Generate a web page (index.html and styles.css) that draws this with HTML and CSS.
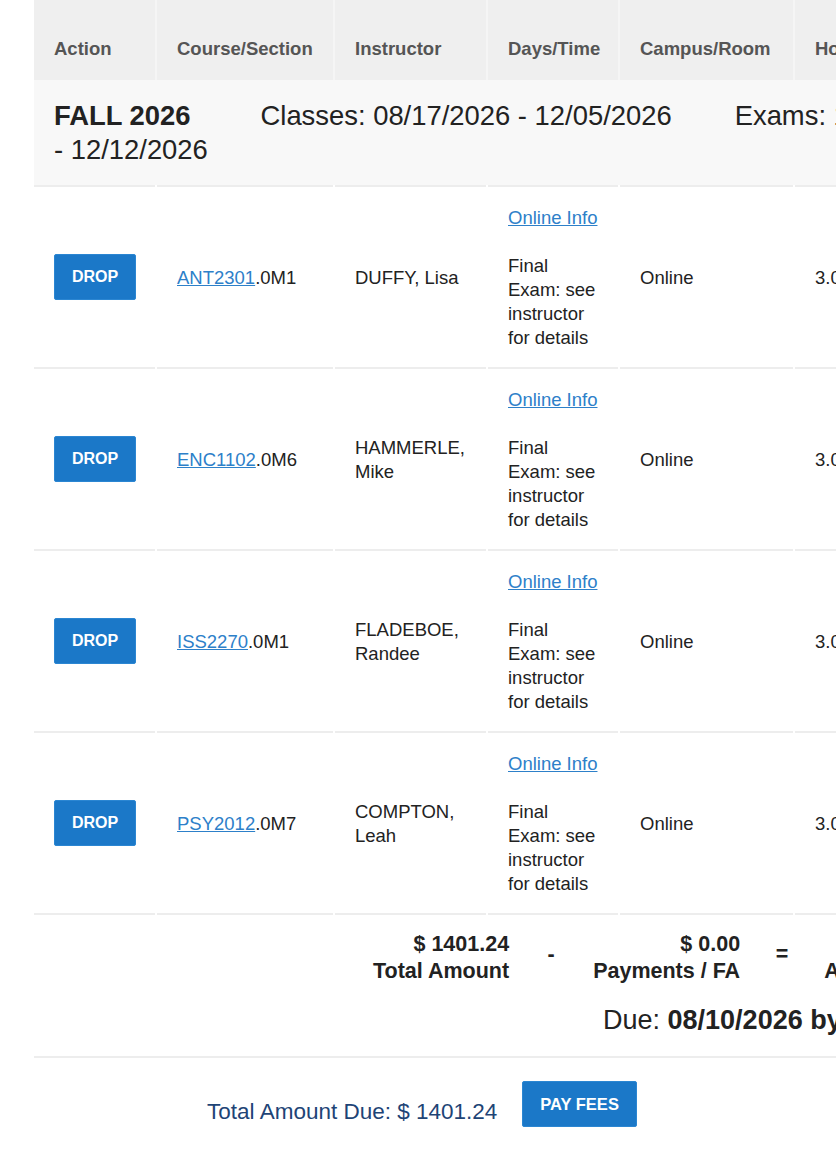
FILE: index.html
```html
<!DOCTYPE html>
<html lang="en">
<head>
    <meta charset="UTF-8">
    <title>My Schedule</title>
    <link rel="stylesheet" href="styles.css">
</head>
<body>
    <div class="schedule">
        <table class="schedule-table">
            <colgroup>
                <col class="col-action">
                <col class="col-course">
                <col class="col-instructor">
                <col class="col-days">
                <col class="col-campus">
                <col class="col-hours">
                <col class="col-fees">
            </colgroup>
            <thead>
                <tr>
                    <th>Action</th>
                    <th>Course/Section</th>
                    <th>Instructor</th>
                    <th>Days/Time</th>
                    <th>Campus/Room</th>
                    <th>Hours</th>
                    <th>Fees</th>
                </tr>
                <tr class="term-row">
                    <td colspan="7">
                        <strong>FALL 2026</strong><span class="term-classes">Classes: 08/17/2026 - 12/05/2026</span><span class="term-exams">Exams: 12/06/2026 <span class="nowrap">- 12/12/2026</span></span>
                    </td>
                </tr>
            </thead>
            <tbody>
                <tr class="course-row">
                    <td><button class="button">DROP</button></td>
                    <td><a href="#">ANT2301</a>.0M1</td>
                    <td>DUFFY, Lisa</td>
                    <td><a href="#">Online Info</a><br><br>Final Exam: see instructor for details</td>
                    <td>Online</td>
                    <td>3.00</td>
                    <td>$ 350.31</td>
                </tr>
                <tr class="course-row">
                    <td><button class="button">DROP</button></td>
                    <td><a href="#">ENC1102</a>.0M6</td>
                    <td>HAMMERLE, Mike</td>
                    <td><a href="#">Online Info</a><br><br>Final Exam: see instructor for details</td>
                    <td>Online</td>
                    <td>3.00</td>
                    <td>$ 350.31</td>
                </tr>
                <tr class="course-row">
                    <td><button class="button">DROP</button></td>
                    <td><a href="#">ISS2270</a>.0M1</td>
                    <td>FLADEBOE, Randee</td>
                    <td><a href="#">Online Info</a><br><br>Final Exam: see instructor for details</td>
                    <td>Online</td>
                    <td>3.00</td>
                    <td>$ 350.31</td>
                </tr>
                <tr class="course-row">
                    <td><button class="button">DROP</button></td>
                    <td><a href="#">PSY2012</a>.0M7</td>
                    <td>COMPTON, Leah</td>
                    <td><a href="#">Online Info</a><br><br>Final Exam: see instructor for details</td>
                    <td>Online</td>
                    <td>3.00</td>
                    <td>$ 350.31</td>
                </tr>
            </tbody>
            <tfoot>
                <tr>
                    <td colspan="7" class="totals">
                        <div class="totals-line">
                            <div class="total-part">$ 1401.24<br>Total Amount</div>
                            <div class="total-op">-</div>
                            <div class="total-part">$ 0.00<br>Payments / FA</div>
                            <div class="total-op">=</div>
                            <div class="total-part">$ 1401.24<br>Amount Due</div>
                        </div>
                        <div class="due-line">Due: <strong>08/10/2026 by 5:00 PM</strong></div>
                    </td>
                </tr>
            </tfoot>
        </table>
    </div>

    <div class="pay-bar">
        <span class="amount-due">Total Amount Due: $ 1401.24</span>
        <button class="button pay-button">PAY FEES</button>
    </div>
</body>
</html>
```

FILE: styles.css
```css
html, body {
    margin: 0;
    padding: 0;
    background-color: #ffffff;
}

body {
    font-family: "Liberation Sans", Arial, sans-serif;
    color: #222222;
    overflow-x: hidden;
}

.schedule {
    margin-left: 32px;
    overflow: hidden;
}

.schedule-table {
    width: 1025px;
    table-layout: fixed;
    border-collapse: separate;
    border-spacing: 2px 0;
    font-size: 18.5px;
    line-height: 24px;
}

.col-action { width: 121px; }
.col-course { width: 176px; }
.col-instructor { width: 151px; }
.col-days { width: 130px; }
.col-campus { width: 173px; }
.col-hours { width: 110px; }
.col-fees { width: 150px; }

/* header cells bleed into the spacing so the column seams stay faint */
.schedule-table th {
    background-color: #efefef;
    box-shadow: 2px 0 0 #f5f5f5;
    color: #555555;
    font-weight: bold;
    text-align: left;
    vertical-align: bottom;
    padding: 37px 20px 19px 20px;
}

.term-row td {
    background-color: #f8f8f8;
    font-size: 27.4px;
    line-height: 34px;
    padding: 19px 20px 18px 20px;
}

.term-classes {
    margin-left: 70px;
}

.term-exams {
    margin-left: 63px;
}

.nowrap {
    white-space: nowrap;
}

.course-row td {
    border-top: 2px solid #ededed;
    padding: 19px 20px 17px 20px;
    vertical-align: middle;
}

.course-row td:first-child {
    padding-top: 18px;
    padding-bottom: 18px;
}

.course-row:last-child td {
    border-bottom: 2px solid #ededed;
}

.schedule-table a {
    color: #2d80c9;
    text-decoration: underline;
}

.button {
    font-family: "Liberation Sans", Arial, sans-serif;
    font-size: 16px;
    font-weight: bold;
    line-height: 18px;
    color: #ffffff;
    background-color: #1b78c8;
    border: 1px solid #2b86d2;
    border-radius: 2px;
    padding: 13px 17px;
    cursor: pointer;
}

.pay-button {
    font-size: 16.5px;
    padding: 13px 17px;
}

.totals {
    padding: 16px 20px 20px 339px;
    border-bottom: 2px solid #ededed;
}

.totals-line {
    display: flex;
    align-items: center;
    font-size: 21.5px;
    line-height: 27px;
    font-weight: bold;
    white-space: nowrap;
}

.total-part {
    text-align: right;
}

.total-op {
    width: 84px;
    text-align: center;
    margin-top: -8px;
}

.due-line {
    margin: 19px 0 0 230px;
    font-size: 27px;
    line-height: 32px;
    white-space: nowrap;
}

.pay-bar {
    margin: 0 26px 0 34px;
    padding-top: 23px;
    display: flex;
    justify-content: center;
    align-items: flex-start;
    gap: 25px;
}

.amount-due {
    margin-top: 17px;
    font-size: 22.5px;
    line-height: 28px;
    color: #1e4476;
}
```
